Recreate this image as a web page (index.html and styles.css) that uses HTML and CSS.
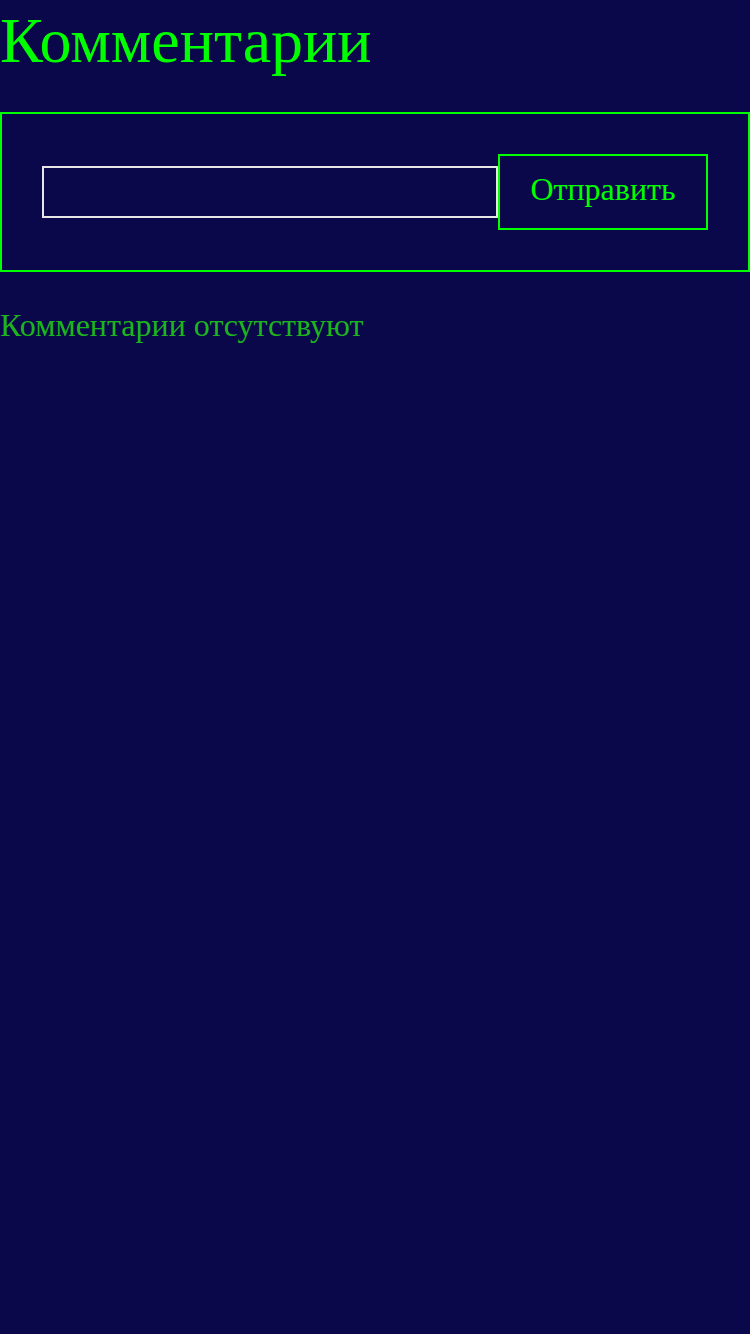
FILE: index.html
```html
<!DOCTYPE html>
<html lang="ru">
<head>
<meta charset="utf-8">
<title>Комментарии</title>
<link rel="stylesheet" href="styles.css">
</head>
<body>
<h1 class="title">Комментарии</h1>
<form class="comment-form">
  <input class="comment-input" type="text">
  <button class="comment-submit" type="button">Отправить</button>
</form>
<p class="empty">Комментарии отсутствуют</p>
</body>
</html>
```
FILE: styles.css
```css
html, body {
  margin: 0;
  padding: 0;
  background: #0a074a;
  min-height: 100%;
}
body {
  font-family: "Liberation Serif", "Times New Roman", serif;
  height: 1334px;
}
.title {
  margin: 0;
  padding-top: 5px;
  font-size: 64px;
  font-weight: normal;
  color: #00ff00;
  line-height: 71px;
}
.comment-form {
  margin: 36px 0 0 0;
  border: 2px solid #00ff00;
  padding: 40px;
  display: flex;
  align-items: center;
}
.comment-input {
  flex: 1;
  height: 52px;
  box-sizing: border-box;
  border: 2px solid #e6e6e6;
  background: transparent;
  margin: 0 0 1px 0;
  padding: 0 4px;
  color: #fff;
  font-family: inherit;
  font-size: 24px;
}
.comment-submit {
  box-sizing: border-box;
  width: 210px;
  height: 76px;
  margin: 0;
  border: 2px solid #00ff00;
  background: transparent;
  color: #00ff00;
  font-family: inherit;
  font-size: 32px;
  padding: 0 0 6px 0;
}
.empty {
  margin: 36px 0 0 0;
  font-size: 32px;
  line-height: 35px;
  color: #1db51d;
}
```
